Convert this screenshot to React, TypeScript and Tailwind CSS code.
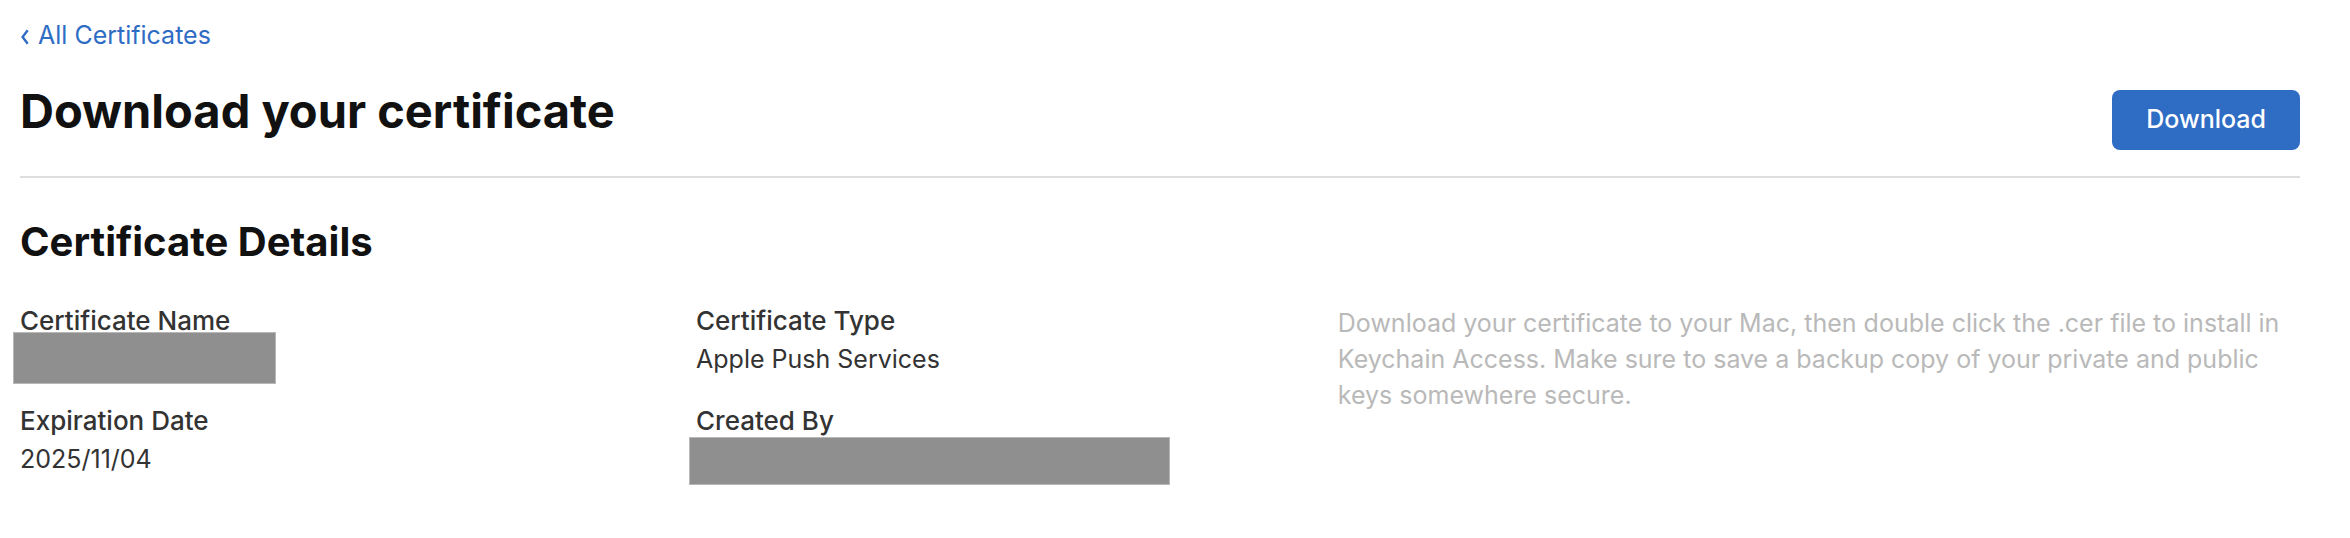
const label = "text-[26px] font-medium";
const redacted = "-ml-[7px] border border-[#b8b8b8] bg-[#8f8f8f]";

export default function App() {
  return (
    <main className="min-h-screen bg-white pt-[18px] pr-[50px] pb-12 pl-5 font-['Inter',sans-serif] text-[25px] leading-[38px] text-[#333]">
      <a href="#certificates" className="flex w-fit items-center gap-2 leading-[34px] text-[#2f6cc4]">
        <svg viewBox="0 0 10 16" className="mt-1 h-4 w-[10px]" fill="none" stroke="currentColor" strokeWidth="2.4" aria-hidden="true">
          <path d="M7.7 1.3 2.6 8l5.1 6.7" />
        </svg>
        All Certificates
      </a>
      <header className="mt-7 flex items-start justify-between border-b-2 border-[#dedede] pb-[26px]">
        <h1 className="pb-[2px] text-[47px] leading-[62px] font-bold text-[#111]">Download your certificate</h1>
        <button type="button" className="mt-[10px] h-[60px] rounded-lg bg-[#2f6cc4] px-[34px] pb-[2px] font-medium text-white">Download</button>
      </header>
      <section>
        <h2 className="mt-10 text-[40px] leading-[48px] font-bold text-[#111]">Certificate Details</h2>
        <div className="mt-9 flex items-start">
          <dl className="w-[29.65%]">
            <dt className={label}>Certificate Name</dt>
            <dd className={`${redacted} -mt-2 h-[52px] w-[263px]`} />
            <dt className={`${label} mt-[18px]`}>Expiration Date</dt>
            <dd>2025/11/04</dd>
          </dl>
          <dl className="w-[28.15%]">
            <dt className={label}>Certificate Type</dt>
            <dd>Apple Push Services</dd>
            <dt className={`${label} mt-6`}>Created By</dt>
            <dd className={`${redacted} -mt-[3px] h-12 w-[481px]`} />
          </dl>
          <p className="flex-1 pt-[3px] leading-9 text-[#b9b9b9]">
            Download your certificate to your Mac, then double click the .cer file to install in Keychain Access. Make sure to save a backup copy of your private and public keys somewhere secure.
          </p>
        </div>
      </section>
    </main>
  );
}
